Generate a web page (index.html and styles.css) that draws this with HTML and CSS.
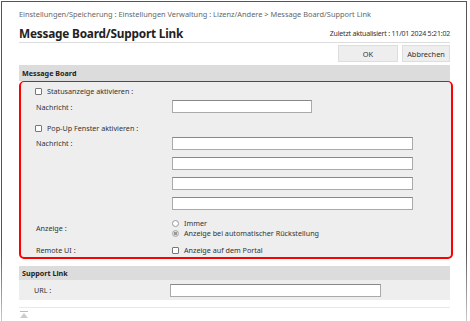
FILE: index.html
```html
<!DOCTYPE html>
<html lang="de">
<head>
  <meta charset="UTF-8">
  <title>Message Board/Support Link</title>
  <link rel="stylesheet" href="styles.css">
</head>
<body>
<div class="frame">
  <div class="breadcrumb">Einstellungen/Speicherung : Einstellungen Verwaltung : Lizenz/Andere &gt; Message Board/Support Link</div>

  <div class="title-bar">
    <h1>Message Board/Support Link</h1>
    <span class="updated">Zuletzt aktualisiert : 11/01 2024 5:21:02</span>
  </div>

  <div class="actions">
    <button class="btn btn-ok">OK</button>
    <button class="btn btn-cancel">Abbrechen</button>
  </div>

  <div class="section-head">Message Board</div>
  <div class="section-body highlight">
    <div class="row row-check">
      <span class="check"></span>
      <span>Statusanzeige aktivieren :</span>
    </div>
    <div class="row row-field">
      <span class="label">Nachricht :</span>
      <span class="input input-short"></span>
    </div>
    <div class="row row-check row-check2">
      <span class="check"></span>
      <span>Pop-Up Fenster aktivieren :</span>
    </div>
    <div class="row row-multi">
      <span class="label">Nachricht :</span>
      <div class="inputs">
        <span class="input input-long"></span>
        <span class="input input-long"></span>
        <span class="input input-long"></span>
        <span class="input input-long"></span>
      </div>
    </div>
    <div class="row row-radio">
      <span class="label">Anzeige :</span>
      <div class="options">
        <div class="option"><span class="radio"></span>Immer</div>
        <div class="option"><span class="radio checked"></span>Anzeige bei automatischer Rückstellung</div>
      </div>
    </div>
    <div class="row row-remote">
      <span class="label">Remote UI :</span>
      <div class="option"><span class="check"></span>Anzeige auf dem Portal</div>
    </div>
  </div>

  <div class="section-head section-support">Support Link</div>
  <div class="section-body">
    <div class="row row-url">
      <span class="label">URL :</span>
      <span class="input input-url"></span>
    </div>
  </div>

  <div class="footer">
    <svg class="to-top" width="8" height="7" viewBox="0 0 8 7">
      <rect x="0" y="0" width="8" height="1" fill="#bbb"></rect>
      <polygon points="4,2 8,7 0,7" fill="#ccc"></polygon>
    </svg>
  </div>
</div>
</body>
</html>
```

FILE: styles.css
```css
body {
  margin: 0;
  background: #fff;
  font-family: 'Noto Sans', 'Open Sans', sans-serif;
  color: #333;
  font-size: 7.2px;
}

.frame {
  margin: 1px 0 0 1px;
  width: 431px;
  height: 330px;
  padding: 0 16px 0 17px;
  border: 1px solid #555;
  border-bottom: none;
  border-image: linear-gradient(#555 75%, #ddd) 1;
}

.breadcrumb {
  height: 12px;
  line-height: 12px;
  margin-top: 6px;
  color: #666;
  font-size: 7.4px;
  white-space: nowrap;
}

.title-bar {
  display: flex;
  justify-content: space-between;
  align-items: center;
  height: 18px;
  margin-top: 1px;
  padding-top: 3px;
  border-bottom: 1px solid #ddd;
}

h1 {
  margin: 0;
  font-size: 11.8px;
  font-weight: bold;
  color: #222;
  letter-spacing: -0.2px;
}

.updated {
  font-size: 7px;
  color: #333;
  letter-spacing: -0.2px;
}

.actions {
  display: flex;
  justify-content: flex-end;
  gap: 4px;
  margin-top: 2px;
}

.btn {
  height: 17px;
  padding: 0;
  border: 1px solid #ddd;
  background: #eee;
  font-family: inherit;
  font-size: 7.4px;
  color: #333;
}

.btn-ok {
  width: 60px;
}

.btn-cancel {
  width: 48px;
}

.section-head {
  height: 16px;
  line-height: 16px;
  margin-top: 3px;
  padding-left: 3px;
  background: #dcdcdc;
  font-weight: bold;
  color: #222;
}

.section-body {
  background: #eee;
}

.highlight {
  margin-right: -3px;
  padding: 2px 0 1px;
  border: 2px solid #f00;
  border-top-width: 1.5px;
  border-radius: 5px;
}

.row {
  display: flex;
  align-items: center;
}

.label {
  width: 136px;
  padding-left: 15px;
  flex-shrink: 0;
}

.row-check {
  height: 14px;
  padding-left: 14px;
  gap: 5px;
}

.row-field {
  margin-top: 2px;
  height: 13px;
}

.row-check2 {
  margin-top: 8px;
}

.row-multi {
  margin-top: 2px;
  align-items: flex-start;
}

.row-multi .label {
  line-height: 13px;
}

.inputs {
  display: flex;
  flex-direction: column;
  gap: 7px;
}

.input {
  display: block;
  box-sizing: border-box;
  height: 13px;
  background: #fff;
  border: 1px solid #aaa;
  border-top-color: #888;
}

.input-short {
  width: 140px;
}

.input-long {
  width: 241px;
}

.input-url {
  width: 211px;
}

.row-radio {
  margin-top: 8px;
}

.options {
  display: flex;
  flex-direction: column;
}

.option {
  display: flex;
  align-items: center;
  gap: 5px;
  height: 10px;
}

.check, .radio {
  display: inline-block;
  box-sizing: border-box;
  width: 7px;
  height: 7px;
  background: #fff;
  border: 1px solid #777;
  border-radius: 1px;
  flex-shrink: 0;
}

.radio {
  border-color: #999;
  border-radius: 50%;
}

.radio.checked {
  border-color: #aaa;
  background: radial-gradient(circle, #999 45%, #ddd 55%);
}

.row-remote {
  margin-top: 6px;
  height: 12px;
}

.row-remote .option {
  height: 12px;
}

.section-support {
  margin-top: 7px;
  height: 14px;
  line-height: 14px;
}

.row-url {
  height: 20px;
}

.footer {
  margin-top: 7px;
  padding-top: 3px;
  border-top: 1px solid #e8e8e8;
}

.to-top {
  display: block;
  margin-left: 1px;
}
```
